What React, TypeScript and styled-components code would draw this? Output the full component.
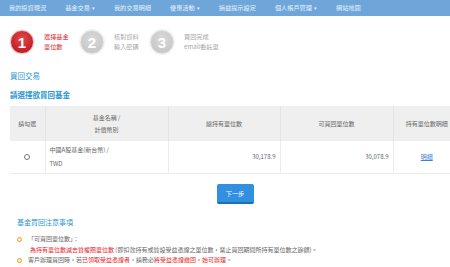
import React from 'react';
import styled, { createGlobalStyle } from 'styled-components';

const GlobalStyle = createGlobalStyle`
  html, body {
    margin: 0;
    padding: 0;
    overflow: hidden;
    background: #ffffff;
  }
  body {
    font-family: "Noto Sans CJK TC", "Liberation Sans", sans-serif;
    color: #666;
  }
`;

const navItems = [
  { label: '我的投資現況' },
  { label: '基金交易', menu: true },
  { label: '我的交易明細' },
  { label: '優惠活動', menu: true },
  { label: '損益提示設定' },
  { label: '個人帳戶管理', menu: true },
  { label: '網站地圖' },
];

const steps = [
  { num: '1', lines: ['選擇基金', '單位數'], active: true },
  { num: '2', lines: ['核對資料', '輸入密碼'] },
  { num: '3', lines: ['買回完成', 'email委託單'] },
];

export default function App() {
  return (
    <Page>
      <GlobalStyle />
      <NavBar>
        {navItems.map((item) => (
          <NavItem key={item.label}>
            {item.label}
            {item.menu && <Caret>▾</Caret>}
          </NavItem>
        ))}
      </NavBar>

      <Steps>
        {steps.map((s) => (
          <Step key={s.num}>
            <StepCircle $active={s.active}>{s.num}</StepCircle>
            <StepText $active={s.active}>
              {s.lines.map((l) => (
                <div key={l}>{l}</div>
              ))}
            </StepText>
          </Step>
        ))}
      </Steps>

      <Content>
        <PageTitle>買回交易</PageTitle>
        <SubTitle>請選擇欲買回基金</SubTitle>

        <Table>
          <colgroup>
            <col style={{ width: 35 }} />
            <col style={{ width: 123 }} />
            <col style={{ width: 112 }} />
            <col style={{ width: 113 }} />
            <col style={{ width: 67 }} />
          </colgroup>
          <thead>
            <tr>
              <Th>請勾選</Th>
              <Th>
                基金名稱 /<br />
                計價幣別
              </Th>
              <Th>總持有單位數</Th>
              <Th>可買回單位數</Th>
              <Th>持有單位數明細</Th>
            </tr>
          </thead>
          <tbody>
            <tr>
              <Td $align="center">
                <Radio />
              </Td>
              <Td>
                中國A股基金(新台幣) /<br />
                TWD
              </Td>
              <Td $align="right">30,178.9</Td>
              <Td $align="right">30,078.9</Td>
              <Td $align="center">
                <DetailLink href="#">明細</DetailLink>
              </Td>
            </tr>
          </tbody>
        </Table>

        <ButtonRow>
          <NextButton>下一步</NextButton>
        </ButtonRow>

        <Notes>
          <NotesTitle>基金買回注意事項</NotesTitle>
          <NoteList>
            <NoteItem>
              「可買回單位數」：
              <NoteLine>
                <Red>為持有單位數減去質權圈單位數</Red> (即扣款持有或質設受益憑證之單位數，禁止買回期間所持有單位數之餘額)。
              </NoteLine>
            </NoteItem>
            <NoteItem>
              客戶辦理買回時，若<Red>已領取受益憑證者</Red>，請務必<Red>將受益憑證繳回，始可辦理</Red>。
            </NoteItem>
          </NoteList>
        </Notes>
      </Content>
    </Page>
  );
}

const Page = styled.div`
  width: 470px;
`;

const NavBar = styled.nav`
  height: 16px;
  background: #6ea6da;
  display: flex;
  align-items: center;
  padding-left: 9px;
  gap: 19px;
`;

const NavItem = styled.span`
  font-size: 6.2px;
  color: #e8f1fb;
  white-space: nowrap;
  line-height: 1;
`;

const Caret = styled.span`
  margin-left: 2px;
  font-size: 5px;
`;

const Steps = styled.div`
  display: flex;
  padding: 14px 0 0 10px;
`;

const Step = styled.div`
  width: 70px;
  display: flex;
  align-items: center;
`;

const StepCircle = styled.div<{ $active?: boolean }>`
  width: 22px;
  height: 22px;
  border-radius: 50%;
  flex: none;
  display: flex;
  align-items: center;
  justify-content: center;
  font-family: "Liberation Sans", Arial, sans-serif;
  font-weight: bold;
  font-size: 15px;
  color: #ffffff;
  border: 1px solid ${(p) => (p.$active ? '#e7b9b9' : '#e2e2e2')};
  background: ${(p) =>
    p.$active
      ? 'radial-gradient(circle at 50% 35%, #e2474c 0%, #c8262c 60%, #a8151b 100%)'
      : 'radial-gradient(circle at 50% 35%, #d9d9d9 0%, #c9c9c9 70%, #bdbdbd 100%)'};
  box-shadow: 0 0 0 1px #f2f2f2;
`;

const StepText = styled.div<{ $active?: boolean }>`
  margin-left: 10px;
  font-size: 6.2px;
  line-height: 10px;
  color: ${(p) => (p.$active ? '#d9272e' : '#a8a8a8')};
  white-space: nowrap;
`;

const Content = styled.div`
  padding: 0 10px;
`;

const PageTitle = styled.div`
  margin-top: 17px;
  font-size: 7.5px;
  line-height: 10px;
  color: #2b96d1;
`;

const SubTitle = styled.div`
  margin-top: 9px;
  font-size: 7.5px;
  line-height: 10px;
  font-weight: bold;
  color: #2b96d1;
`;

const Table = styled.table`
  margin-top: 6px;
  width: 450px;
  border-collapse: collapse;
  table-layout: fixed;
  font-size: 6px;
`;

const Th = styled.th`
  background: #efefef;
  height: 35px;
  padding: 0 4px;
  font-weight: normal;
  color: #666;
  line-height: 12px;
  border-left: 1px solid #e4e4e4;
  &:first-child {
    border-left: none;
  }
`;

const Td = styled.td<{ $align?: string }>`
  height: 32px;
  padding: 0 4px;
  color: #666;
  line-height: 14px;
  text-align: ${(p) => p.$align || 'left'};
  border-left: 1px solid #ececec;
  border-bottom: 1px solid #ececec;
  &:first-child {
    border-left: none;
  }
`;

const Radio = styled.span`
  display: inline-block;
  width: 4px;
  height: 4px;
  border: 1px solid #777;
  border-radius: 50%;
  vertical-align: middle;
`;

const DetailLink = styled.a`
  color: #3b82d6;
  text-decoration: underline;
`;

const ButtonRow = styled.div`
  display: flex;
  justify-content: center;
  margin-top: 10px;
`;

const NextButton = styled.button`
  width: 37px;
  height: 20px;
  padding: 0;
  border: none;
  border-bottom: 2px solid #1f6db4;
  border-radius: 2px;
  background: #3190df;
  color: #ffffff;
  font-family: inherit;
  font-size: 6.2px;
  cursor: pointer;
`;

const Notes = styled.div`
  padding-left: 7px;
  margin-top: 13px;
`;

const NotesTitle = styled.div`
  font-size: 7px;
  line-height: 10px;
  color: #2b96d1;
`;

const NoteList = styled.ul`
  list-style: none;
  margin: 7px 0 0;
  padding: 0;
`;

const NoteItem = styled.li`
  position: relative;
  padding-left: 11px;
  font-size: 6px;
  line-height: 10.5px;
  color: #666;
  white-space: nowrap;
  &::before {
    content: '';
    position: absolute;
    left: 0;
    top: 3px;
    width: 3px;
    height: 3px;
    border-radius: 50%;
    background: #fff3c4;
    border: 1px solid #f29a2e;
  }
`;

const NoteLine = styled.div`
  padding-left: 2px;
`;

const Red = styled.span`
  color: #e2262c;
`;
